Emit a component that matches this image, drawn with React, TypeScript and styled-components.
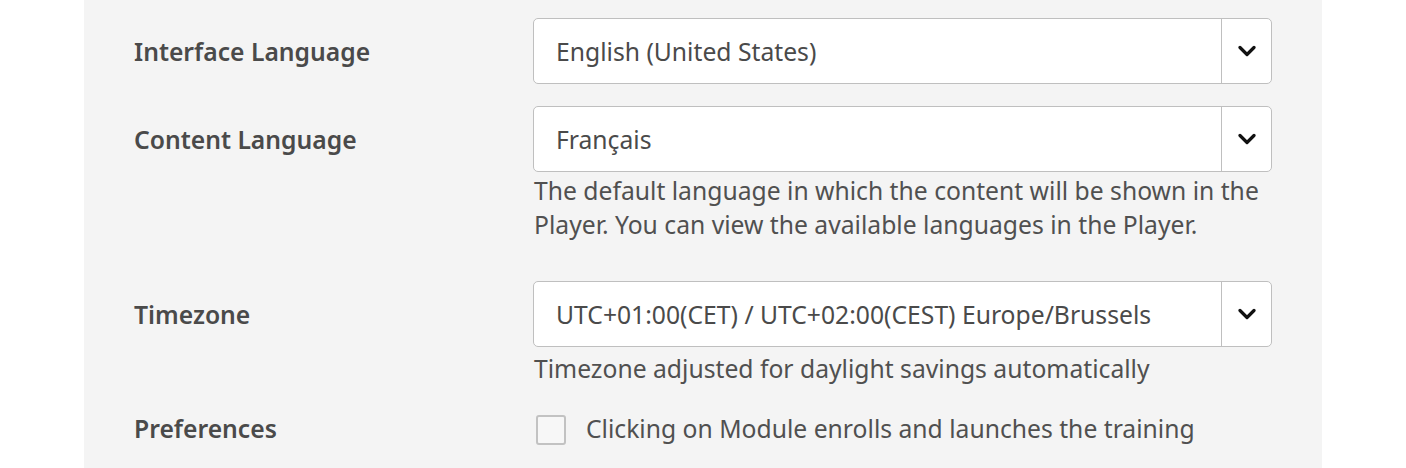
import React from "react";
import styled, { createGlobalStyle } from "styled-components";

const GlobalStyle = createGlobalStyle`
  html, body { margin: 0; padding: 0; background: #ffffff; }
  body { font-family: "Noto Sans", "Open Sans", sans-serif; }
  * { box-sizing: border-box; }
`;

const Page = styled.div`
  display: flex;
  padding-left: 84px;
  height: 468px;
  overflow: hidden;
`;

const Panel = styled.section`
  width: 1238px;
  background: #f4f4f4;
  padding: 18px 50px 40px 50px;
  display: flex;
  flex-direction: column;
  gap: 22px;
`;

const Row = styled.div`
  display: grid;
  grid-template-columns: 399px 739px;
  align-items: start;
`;

const Label = styled.div<{ $h?: number }>`
  height: ${(p) => p.$h ?? 66}px;
  display: flex;
  align-items: center;
  font-size: 24.7px;
  font-weight: 600;
  color: #4a4a4a;
`;

const Field = styled.div`
  display: flex;
  flex-direction: column;
`;

const Select = styled.div`
  height: 66px;
  display: flex;
  align-items: stretch;
  background: #ffffff;
  border: 1.5px solid #bfbfbf;
  border-radius: 5px;
`;

const Value = styled.div`
  flex: 1;
  display: flex;
  align-items: center;
  padding-left: 22px;
  font-size: 24.7px;
  color: #4a4a4a;
  white-space: nowrap;
`;

const Toggle = styled.div`
  width: 50px;
  border-left: 1.5px solid #bfbfbf;
  display: flex;
  align-items: center;
  justify-content: center;
`;

const Help = styled.p<{ $mt?: number; $mb?: number }>`
  margin: ${(p) => p.$mt ?? 0}px 0 ${(p) => p.$mb ?? 0}px 0;
  font-size: 24.7px;
  line-height: 34px;
  color: #505050;
  padding-left: 1px;
`;

const CheckRow = styled.label`
  height: 34px;
  display: flex;
  align-items: center;
  gap: 20px;
  padding-left: 3px;
  font-size: 24.7px;
  color: #505050;
`;

const Box = styled.span`
  width: 30px;
  height: 30px;
  margin-top: 4px;
  border: 2px solid #c2c2c2;
  border-radius: 3px;
  background: #f7f7f7;
  flex: none;
`;

const Chevron = () => (
  <svg width="18" height="12" viewBox="0 0 18 12" aria-hidden="true">
    <polyline
      points="2,2.5 9,9.5 16,2.5"
      fill="none"
      stroke="#111111"
      strokeWidth="3.2"
      strokeLinecap="round"
      strokeLinejoin="round"
    />
  </svg>
);

const SelectBox = ({ value }: { value: string }) => (
  <Select>
    <Value>{value}</Value>
    <Toggle>
      <Chevron />
    </Toggle>
  </Select>
);

export default function App() {
  return (
    <>
      <GlobalStyle />
      <Page>
        <Panel>
          <Row>
            <Label>Interface Language</Label>
            <Field>
              <SelectBox value="English (United States)" />
            </Field>
          </Row>
          <Row>
            <Label>Content Language</Label>
            <Field>
              <SelectBox value="Français" />
              <Help $mt={2} $mb={17}>
                The default language in which the content will be shown in the Player. You can view the available
                languages in the Player.
              </Help>
            </Field>
          </Row>
          <Row>
            <Label>Timezone</Label>
            <Field>
              <SelectBox value="UTC+01:00(CET) / UTC+02:00(CEST) Europe/Brussels" />
              <Help $mt={5} $mb={3}>Timezone adjusted for daylight savings automatically</Help>
            </Field>
          </Row>
          <Row>
            <Label $h={34}>Preferences</Label>
            <Field>
              <CheckRow>
                <Box />
                Clicking on Module enrolls and launches the training
              </CheckRow>
            </Field>
          </Row>
        </Panel>
      </Page>
    </>
  );
}
